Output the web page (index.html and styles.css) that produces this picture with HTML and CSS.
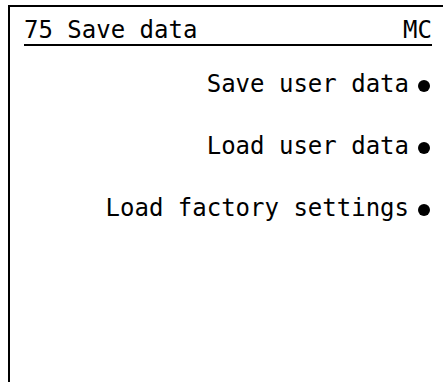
FILE: index.html
```html
<!DOCTYPE html>
<html>
<head>
<meta charset="utf-8">
<link rel="stylesheet" href="styles.css">
</head>
<body>
<div class="screen">
  <div class="header">
    <span class="title">75 Save data</span>
    <span class="mode">MC</span>
  </div>
  <div class="menu">
    <div class="item"><span class="label">Save user data</span><span class="dot"></span></div>
    <div class="item"><span class="label">Load user data</span><span class="dot"></span></div>
    <div class="item"><span class="label">Load factory settings</span><span class="dot"></span></div>
  </div>
</div>
</body>
</html>
```

FILE: styles.css
```css
html, body {
  margin: 0;
  padding: 0;
  background: #fff;
}
body {
  width: 443px;
  height: 382px;
  overflow: hidden;
  font-family: "DejaVu Sans Mono", "Liberation Mono", monospace;
  font-size: 24px;
  color: #000;
}
.screen {
  margin: 5px 0 0 8px;
  height: 377px;
  border-top: 2px solid #000;
  border-left: 2px solid #000;
  box-sizing: border-box;
  padding: 10px 11px 0 14px;
}
.header {
  display: flex;
  justify-content: space-between;
  line-height: 27px;
  border-bottom: 2px solid #000;
}
.menu {
  display: flex;
  flex-direction: column;
  align-items: flex-end;
  gap: 34px;
  margin-top: 24px;
}
.item {
  display: flex;
  align-items: center;
  gap: 9px;
  line-height: 28px;
  padding-right: 2px;
}
.dot {
  width: 12px;
  height: 12px;
  border-radius: 50%;
  background: #000;
  margin-top: 4px;
}
```
